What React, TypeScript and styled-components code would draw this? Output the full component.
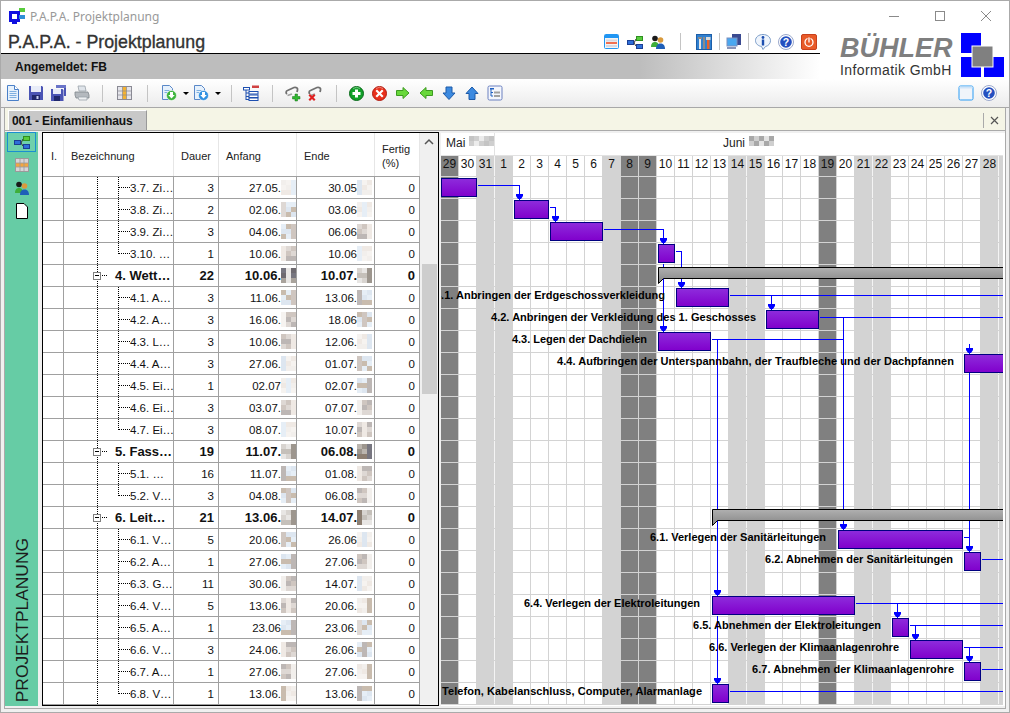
import React from "react";
import styled, { createGlobalStyle } from "styled-components";

const Global = createGlobalStyle`
  html, body { margin: 0; padding: 0; width: 1010px; height: 713px; overflow: hidden; background: #f0f0f0; }
  body { font-family: "Liberation Sans", Arial, sans-serif; }
  * { box-sizing: border-box; }
`;

/* ---------- shell ---------- */
const Win = styled.div`
  width: 1010px; height: 713px; border: 1px solid #aaa; background: #f0f0f0;
  display: flex; flex-direction: column; overflow: hidden;
`;
const Masthead = styled.header`display: flex; height: 78px; background: #fff;`;
const MastLeft = styled.div`width: 819px; display: flex; flex-direction: column;`;
const TitleBar = styled.div`height: 29px; display: flex; align-items: center; padding-left: 8px; gap: 5px;`;
const WinTitle = styled.span`font-family: "Noto Sans", sans-serif; font-size: 12px; color: #999; padding-top: 1px;`;
const AppBar = styled.div`height: 24px; display: flex; align-items: center; padding-left: 7px; border-bottom: 1px solid #000;`;
const AppTitle = styled.h1`
  margin: 0 auto 0 0; font-size: 17.8px; font-weight: 400; color: #333; -webkit-text-stroke: .35px #333; line-height: 24px;
`;
const UserBand = styled.div`
  height: 25px; display: flex; align-items: center; padding-left: 14px;
  background: linear-gradient(90deg, #bdbdbd 0, #bdbdbd 78%, #fff 100%);
  font-size: 12px; font-weight: 700; color: #111;
`;
const MastRight = styled.div`flex: 1; display: flex; flex-direction: column;`;
const WinControls = styled.div`height: 29px; display: flex; justify-content: flex-end; margin-right: 0;`;
const Ctl = styled.span`width: 46px; display: flex; align-items: center; justify-content: center;`;
const LogoRow = styled.div`display: flex; padding: 3px 0 0 20px; gap: 8px;`;
const LogoText = styled.div`width: 112px; display: flex; flex-direction: column; color: #7f7f7f;`;
const LogoName = styled.span`font-size: 27px; font-weight: 700; font-style: italic; line-height: 30px; height: 29px; white-space: nowrap;`;
const LogoSub = styled.span`font-size: 14px; letter-spacing: .4px; color: #333; line-height: 16px; white-space: nowrap;`;

/* ---------- toolbar ---------- */
const Toolbar = styled.div`
  height: 29px; display: flex; align-items: center; padding-right: 9px; flex: none;
  background: linear-gradient(#fff, #ececec); border-bottom: 1px solid #a8a8a8;
`;
const Tool = styled.span`width: 23px; height: 22px; display: flex; align-items: center; justify-content: center; flex: none;`;
const Drop = styled.span`width: 32px; height: 22px; display: flex; align-items: center; padding-left: 3px; gap: 6px; flex: none;`;
const Caret = styled.i`width: 0; height: 0; border: 3px solid transparent; border-top: 3px solid #000; border-bottom: 0; flex: none;`;
const Sep = styled.span<{ $l: number; $r: number }>`
  width: 1px; height: 17px; background: #c4c4c4; flex: none;
  margin-left: ${p => p.$l}px; margin-right: ${p => p.$r}px;
`;
const Spring = styled.span`margin-left: auto;`;

/* ---------- panel ---------- */
const Panel = styled.div`
  margin: 0 3px 3px; flex: 1; display: flex; flex-direction: column;
  border: 1px solid #aaa; border-top: 0; min-height: 0;
`;
const TabStrip = styled.div`
  height: 23px; flex: none; display: flex; align-items: flex-end; padding-left: 3px;
  background: #f5f5e6; border-bottom: 1px solid #aaa;
`;
const Tab = styled.div`
  width: 139px; height: 20px; padding: 3px 0 0 3px; background: #c8c8c8;
  border-top: 1px solid #fff; border-left: 1px solid #fff; border-right: 1px solid #999;
  font-size: 12px; font-weight: 700; color: #111; letter-spacing: -.1px; white-space: nowrap;
`;
const TabClose = styled.div`
  margin: 0 0 2px auto; width: 22px; height: 15px; border-left: 1px solid #aaa;
  display: flex; align-items: center; justify-content: center;
`;
const Main = styled.div`flex: 1; display: flex; align-items: flex-start; padding: 1px 0 2px; min-height: 0;`;

/* ---------- side rail ---------- */
const Rail = styled.nav`
  width: 33px; align-self: stretch; background: #66cca5; display: flex; flex-direction: column; align-items: center; gap: 3px;
`;
const RailBtn = styled.span<{ $active?: boolean }>`
  width: 29px; height: 20px; display: flex; align-items: center; justify-content: center;
  border: 1px solid ${p => (p.$active ? "#1a8fd0" : "transparent")};
  background: ${p => (p.$active ? "#6fd0ac" : "transparent")};
`;
const RailLabel = styled.span`
  margin-top: auto; padding-top: 0; margin-bottom: 4px; writing-mode: vertical-rl; transform: rotate(180deg);
  font-size: 17.4px; color: #1c1c1c; line-height: 20px; white-space: nowrap;
`;

/* ---------- table ---------- */
const Frame = styled.section`
  width: 397px; height: 574px; margin-left: 4px; flex: none; display: flex; background: #fff;
  border: 1px solid #000; border-bottom-color: #000;
`;
const Table = styled.div`width: 377px; flex: none;`;
const cols = "21px 110px 45px 78px 78px 45px";
const HeadRow = styled.div`
  display: grid; grid-template-columns: ${cols}; height: 44px; border-bottom: 1px solid #a0a0a0;
`;
const HeadCell = styled.div<{ $first?: boolean }>`
  border-right: 1px solid #e6e6e6; display: flex; align-items: center; padding: 2px 0 0 ${p => (p.$first ? 8 : 7)}px;
  font-size: 11px; line-height: 14px; color: #222;
`;
const Row = styled.div`display: grid; grid-template-columns: ${cols}; height: 22px;`;
const Cell = styled.div<{ $bold?: boolean }>`
  border-right: 1px solid #a0a0a0; border-bottom: 1px solid #a0a0a0; display: flex; align-items: center; overflow: hidden;
  font-size: ${p => (p.$bold ? "13px" : "11.5px")}; font-weight: ${p => (p.$bold ? 700 : 400)}; color: #111; white-space: nowrap;
`;
const NumCell = styled(Cell)`justify-content: flex-end; padding-right: 4px;`;
const DateCell = styled(Cell)<{ $end?: boolean }>`justify-content: flex-end; padding-right: ${p => (p.$end ? 2 : 0)}px;`;

const dotV = "repeating-linear-gradient(to bottom, #000 0 1px, transparent 1px 2px)";
const dotH = "repeating-linear-gradient(to right, #000 0 1px, transparent 1px 2px)";
const NameCell = styled(Cell)<{ $kind: "child" | "last" | "group" }>`
  padding-left: ${p => (p.$kind === "group" ? 29 : 66)}px;
  background-repeat: no-repeat;
  background-image: ${p =>
    p.$kind === "group"
      ? `${dotV}, ${dotH}`
      : `${dotV}, ${dotV}, ${dotH}`};
  background-size: ${p =>
    p.$kind === "group"
      ? "1px 100%, 6px 1px"
      : `1px 100%, 1px ${p.$kind === "last" ? "11px" : "100%"}, 11px 1px`};
  background-position: ${p =>
    p.$kind === "group" ? "33px 0, 38px 10px" : "33px 0, 54px 0, 55px 10px"};
`;
const Toggle = styled.span`
  width: 8px; height: 8px; border: 1px solid #808080; background: #fff; margin-right: 14px; flex: none;
  display: flex; align-items: center; justify-content: center;
  &::after { content: ""; width: 4px; height: 1px; background: #000; }
`;
const Scroll = styled.div`width: 18px; flex: none; background: #f0f0f0; display: flex; flex-direction: column;`;
const ScrollBtn = styled.div`height: 17px; display: flex; align-items: center; justify-content: center;`;
const Thumb = styled.div`width: 15px; height: 130px; margin: 114px 0 0 2px; background: #cdcdcd;`;

/* ---------- redacted years ---------- */
const Redact = styled.span<{ $c: number; $t: number }>`
  display: inline-grid; flex: none; grid-template-columns: repeat(${p => p.$c}, ${p => p.$t}px); grid-auto-rows: ${p => p.$t}px;
`;
const Tile = styled.i.attrs<{ $f: string }>(p => ({ style: { background: p.$f } }))<{ $f: string }>``;

const pale = ["#f6f3f0", "#ded8d4", "#c9bcae", "#f2efec", "#bdb7b5", "#dde6f0", "#efe9e4", "#cfc6c0", "#e6eef6"];
const dark = ["#e8e6e4", "#a9a39c", "#8d7f72", "#c5c0ba", "#777680", "#9d968e", "#d8d4d0", "#6e6a70", "#bbb5ae"];
const grey = ["#dcdcdc", "#bfbfbf", "#ececec", "#cfcfcf", "#a8a8a8", "#d8d8d8", "#c4c4c4", "#e4e4e4"];

function Blot({ seed, tones = pale, cols: c = 3, rows = 3, size = 5 }: { seed: number; tones?: string[]; cols?: number; rows?: number; size?: number }) {
  const tiles = Array.from({ length: c * rows }, (_, i) => tones[(seed * 7 + i * (seed % 5 + 2) + i * i) % tones.length]);
  return (
    <Redact $c={c} $t={size} aria-hidden>
      {tiles.map((f, i) => <Tile key={i} $f={f} />)}
    </Redact>
  );
}

/* ---------- chart ---------- */
const Chart = styled.section`flex: 1; height: 573px; margin: 1px 0 0 2px; background: #fff; overflow: hidden;`;
const Months = styled.div`height: 23px; display: flex; border-bottom: 1px solid #e2e2e2; width: 562px;`;
const Month = styled.div<{ $w?: number; $pad: number }>`
  ${p => (p.$w ? `width:${p.$w}px; border-right:1px solid #e2e2e2;` : "flex:1;")}
  padding: 3px 0 0 ${p => p.$pad}px; display: flex; gap: 4px; font-size: 12px; color: #222;
`;
const Days = styled.div`display: flex; width: 562px; height: 20px; overflow: hidden;`;
const Day = styled.div<{ $tone: "w" | "l" | "d"; $gap: string }>`
  width: 18px; flex: none; height: 20px; text-align: center; font-size: 12px; line-height: 16px; color: #111;
  background: ${p => (p.$tone === "d" ? "#808080" : p.$tone === "l" ? "#d3d3d3" : "#fff")};
  border-right: 1px solid ${p => p.$gap};
`;
const GanttSvg = styled.svg`display: block; width: 562px; height: 529px;`;
const BarLabel = styled.text`font: 700 11px "Liberation Sans", Arial, sans-serif; fill: #000;`;

/* ---------- icons ---------- */
const G = styled.svg<{ $s?: number }>`display: block; width: ${p => p.$s ?? 16}px; height: ${p => p.$s ?? 16}px; flex: none; overflow: visible;`;

const Flow = ({ s }: { s?: number }) => (
  <G $s={s} viewBox="0 0 16 16">
    <path d="M7 9 L9 5 M7 9 L9 12" stroke="#333" fill="none" />
    <rect x=".5" y="6.5" width="6" height="4" fill="#2f6fd8" stroke="#1b3f95" />
    <rect x="9.5" y="2.5" width="6" height="4" fill="#58cc3c" stroke="#2f9020" />
    <rect x="9.5" y="10.5" width="6" height="4" fill="#2f6fd8" stroke="#1b3f95" />
  </G>
);
const Users = () => (
  <G viewBox="0 0 16 16">
    <circle cx="5" cy="4.5" r="2.8" fill="#1a1a1a" />
    <path d="M1 13c0-4 2-5 4-5s4 1 4 5z" fill="#3fae3a" />
    <circle cx="10.5" cy="6" r="2.8" fill="#d99a3c" />
    <path d="M6 15c0-4 2-5.500 4.500-5.500S15 11 15 15z" fill="#1f5fb8" />
  </G>
);
const Calendar = () => (
  <G viewBox="0 0 16 16">
    <rect x=".5" y=".5" width="14" height="14" rx="1" fill="#f4f4f4" stroke="#2196f3" />
    <rect x="1" y="1" width="13" height="3" fill="#2196f3" />
    <rect x="2" y="5.500" width="11" height="2" fill="#d8d8e0" />
    <rect x="2" y="8" width="11" height="2" fill="#f07050" />
    <rect x="2" y="11" width="11" height="2" fill="#d8d8e0" />
  </G>
);
const Toolbox = () => (
  <G viewBox="0 0 16 16">
    <rect x=".5" y=".5" width="15" height="15" fill="#2f80d0" stroke="#1d5ea8" />
    <rect x="3" y="3" width="2" height="12" fill="#e8e8e8" />
    <path d="M2 3h4v2H2z" fill="#8a8a8a" />
    <rect x="7" y="3" width="2" height="12" fill="#8a8a8a" />
    <rect x="11" y="6" width="2.500" height="9" fill="#e8622a" />
    <rect x="10" y="3" width="4.500" height="3" fill="#dcdcdc" />
  </G>
);
const Monitor = () => (
  <G viewBox="0 0 16 16">
    <rect x="6" y="0" width="9" height="11" fill="#3a4a90" />
    <rect x="1" y="4" width="10" height="8" fill="#4aa8f0" stroke="#7a90c0" />
    <path d="M1 13h9v2H1z" fill="#8a94b8" />
  </G>
);
const Info = () => (
  <G viewBox="0 0 16 16">
    <path d="M8 .5c4.200 0 7.500 2.600 7.500 6s-2.500 5.500-5 6L8 15.500l-1.500-3c-3-.5-6-2.500-6-6s3.300-6 7.500-6z" fill="#eef4fc" stroke="#7a9cc8" />
    <circle cx="8" cy="3.500" r="1.400" fill="#1d4fb0" />
    <rect x="6.800" y="5.500" width="2.400" height="6" fill="#1d4fb0" />
  </G>
);
const Help = () => (
  <G viewBox="0 0 16 16">
    <circle cx="8" cy="8" r="7.500" fill="#fff" stroke="#9aa8cc" />
    <circle cx="8" cy="8" r="5.800" fill="#2450c0" />
    <text x="8" y="11.800" textAnchor="middle" fontSize="10.500" fontWeight="700" fill="#fff" fontFamily="Liberation Sans">?</text>
  </G>
);
const Power = () => (
  <G viewBox="0 0 16 16">
    <rect x=".5" y=".5" width="15" height="15" rx="1.500" fill="#e85a28" stroke="#c8401c" />
    <circle cx="8" cy="8.300" r="4" fill="none" stroke="#fff" strokeWidth="1.300" />
    <path d="M8 3.500v5" stroke="#e85a28" strokeWidth="3" />
    <path d="M8 3.500v5" stroke="#fff" strokeWidth="1.300" />
  </G>
);
const PageIcon = () => (
  <G viewBox="0 0 16 16">
    <path d="M2.500 .5h7l4 4v11h-11z" fill="#e6f1fc" stroke="#4a80c8" />
    <path d="M9.500 .5v4h4" fill="#fff" stroke="#4a80c8" />
    <path d="M4.500 6.500h7M4.500 8.500h7M4.500 10.500h7M4.500 12.500h7" stroke="#7fb0e0" />
  </G>
);
const Save = () => (
  <G viewBox="0 0 16 16">
    <path d="M1 1h13l1 1v13H1z" fill="#4a54b4" />
    <rect x="3" y="1" width="10" height="6" fill="#e8ecf8" />
    <rect x="4" y="10" width="8" height="5" fill="#20286c" />
    <rect x="8.500" y="11" width="2" height="3" fill="#c8d0f0" />
  </G>
);
const SaveAll = () => (
  <G viewBox="0 0 16 16">
    <path d="M5 0h10v11h-2V0z" fill="#4a54b4" />
    <rect x="5" y="0" width="10" height="3" fill="#6a74c8" />
    <path d="M0 4h11.500l1 1v11H0z" fill="#4a54b4" />
    <rect x="2" y="4" width="8" height="5" fill="#e8ecf8" />
    <rect x="3" y="11" width="6" height="5" fill="#20286c" />
  </G>
);
const Printer = () => (
  <G viewBox="0 0 16 16">
    <path d="M4 1h7l1 5H5z" fill="#dfe4ea" stroke="#9aa2aa" strokeWidth=".8" />
    <path d="M1 7h13l1 3v3H2l-1-3z" fill="#b4b9be" stroke="#7f858c" strokeWidth=".8" />
    <path d="M4 12h9v3H5z" fill="#eef0f2" stroke="#9aa2aa" strokeWidth=".8" />
  </G>
);
const ColumnsIcon = () => (
  <G viewBox="0 0 16 16">
    <rect x=".5" y="1.500" width="14" height="13" fill="#e4e4ea" stroke="#8a8a94" />
    <rect x="5.500" y="2" width="4" height="12" fill="#f4b230" />
    <path d="M5.500 2v12M9.500 2v12M1 6h13M1 10h13" stroke="#8a8a94" strokeWidth=".7" />
  </G>
);
const TableIcon = () => (
  <G viewBox="0 0 16 16">
    <rect x="1.500" y="1.500" width="13" height="13" fill="#d8d4d8" stroke="#9a9a9a" />
    <rect x="2" y="6" width="12" height="4" fill="#f4a640" />
    <path d="M6 2v12M10 2v12M2 6h12M2 10h12" stroke="#9a9a9a" strokeWidth=".8" />
  </G>
);
const DocBadge = ({ c, d }: { c: string; d: string }) => (
  <G viewBox="0 0 16 16">
    <path d="M1.500 .5h7l3 3v11h-10z" fill="#e6f1fc" stroke="#5a88c8" />
    <path d="M3.500 5.500h5M3.500 7.500h5" stroke="#7fb0e0" />
    <circle cx="10.500" cy="10.500" r="5" fill={c} stroke="#fff" strokeWidth=".6" />
    <path d={d} fill="#fff" />
  </G>
);
const TreeIcon = () => (
  <G viewBox="0 0 16 16">
    <rect x="9" y=".5" width="7" height="2.500" fill="#d04040" />
    <rect x=".5" y="2.500" width="6" height="2.500" fill="#fff" stroke="#1d4fb0" />
    <path d="M3 5v10M3 8h3M3 11.500h3M3 14.500h3" stroke="#1d4fb0" />
    <rect x="6" y="6.500" width="9" height="2.500" fill="#fff" stroke="#1d4fb0" />
    <rect x="6" y="10" width="9" height="2.500" fill="#fff" stroke="#1d4fb0" />
    <rect x="6" y="13" width="9" height="2.500" fill="#fff" stroke="#1d4fb0" />
  </G>
);
const Chain = ({ children }: { children: React.ReactNode }) => (
  <G viewBox="0 0 16 16">
    <path d="M2 9c-1.500-1-1-3 .5-3.500L9 2.500c2-.5 4 .5 3.500 2.500l-.5 2" fill="none" stroke="#707070" strokeWidth="1.800" />
    <path d="M2.500 10.500L7 9" stroke="#a0a0a0" strokeWidth="1.800" />
    {children}
  </G>
);
const RoundBtn = ({ c, e, children }: { c: string; e: string; children: React.ReactNode }) => (
  <G $s={15} viewBox="0 0 15 15">
    <circle cx="7.500" cy="7.500" r="7" fill={c} stroke={e} />
    <path d="M4 2.500a6 6 0 0 1 7 0" stroke="#fff" strokeOpacity=".4" fill="none" />
    {children}
  </G>
);
const Arrow = ({ d, c, e }: { d: string; c: string; e: string }) => (
  <G $s={14} viewBox="0 0 14 14"><path d={d} fill={c} stroke={e} /></G>
);
const MiniTree = () => (
  <G viewBox="0 0 16 16">
    <rect x="1" y="1" width="14" height="14" rx="1.500" fill="#f4f6fc" stroke="#6a80c0" />
    <path d="M4 4v7h2M4 7.500h2" stroke="#2060c0" fill="none" />
    <rect x="3" y="3" width="4" height="1.500" fill="#2060c0" />
    <rect x="7" y="6.500" width="6" height="2" fill="#a0a0a0" />
    <rect x="7" y="10" width="6" height="2" fill="#a0a0a0" />
  </G>
);
const WindowIcon = () => (
  <G viewBox="0 0 16 16">
    <rect x="1" y="1" width="14" height="14" rx="1.500" fill="#f0f4fa" stroke="#2a9cf4" />
    <rect x="1.500" y="1.500" width="13" height="2" fill="#cfe4f8" />
  </G>
);
const AppIcon = () => (
  <G viewBox="0 0 16 16">
    <rect x="10" y="0" width="6" height="4" fill="#58cc3c" />
    <rect x="0" y="3" width="11" height="11" fill="#1010e0" />
    <rect x="3" y="6" width="5" height="5" fill="#fff" />
    <rect x="3" y="13" width="5" height="3" fill="#1010e0" />
    <rect x="10" y="7" width="6" height="4" fill="#2f90d8" />
  </G>
);
const RailDoc = () => (
  <G viewBox="0 0 16 16">
    <path d="M2.500 .5h7.500l3.500 3.500v11.500h-11z" fill="#fff" stroke="#000" />
  </G>
);
const LogoMark = () => (
  <G $s={44} viewBox="0 0 44 44">
    <rect x="1" y="0" width="20" height="20" fill="#0000ff" />
    <rect x="1" y="24" width="20" height="20" fill="#0000ff" />
    <rect x="24" y="24" width="20" height="20" fill="#0000ff" />
    <rect x="12" y="13" width="21" height="21" fill="#808080" stroke="#fff" />
  </G>
);

/* ---------- data ---------- */
type R = [string, string, string, string, string?];
const rows: R[] = [
  ["3.7. Zi…", "3", "27.05.", "30.05"],
  ["3.8. Zi…", "2", "02.06.", "03.06"],
  ["3.9. Zi…", "3", "04.06.", "06.06"],
  ["3.10. …", "1", "10.06.", "10.06", "last"],
  ["4. Wett…", "22", "10.06.", "10.07.", "group"],
  ["4.1. A…", "3", "11.06.", "13.06."],
  ["4.2. A…", "3", "16.06.", "18.06"],
  ["4.3. L…", "3", "10.06.", "12.06."],
  ["4.4. A…", "3", "27.06.", "01.07."],
  ["4.5. Ei…", "1", "02.07", "02.07."],
  ["4.6. Ei…", "3", "03.07.", "07.07."],
  ["4.7. Ei…", "3", "08.07.", "10.07.", "last"],
  ["5. Fass…", "19", "11.07.", "06.08.", "group"],
  ["5.1.  …", "16", "11.07.", "01.08."],
  ["5.2. V…", "3", "04.08.", "06.08.", "last"],
  ["6. Leit…", "21", "13.06.", "14.07.", "group"],
  ["6.1. V…", "5", "20.06.", "26.06"],
  ["6.2. A…", "1", "27.06.", "27.06."],
  ["6.3. G…", "11", "30.06.", "14.07."],
  ["6.4. V…", "5", "13.06.", "20.06."],
  ["6.5. A…", "1", "23.06", "23.06."],
  ["6.6. V…", "3", "24.06.", "26.06."],
  ["6.7. A…", "1", "27.06.", "27.06."],
  ["6.8. V…", "1", "13.06.", "13.06.", "last"],
];

const dayNums = [29, 30, 31, ...Array.from({ length: 29 }, (_, i) => i + 1)];
const darkIdx = new Set([0, 10, 11, 21]);
const lightIdx = new Set([2, 3, 9, 16, 17, 23, 24, 30, 31]);
const toneOf = (i: number): "w" | "l" | "d" => (darkIdx.has(i) ? "d" : lightIdx.has(i) ? "l" : "w");
const gapOf = (i: number) => (toneOf(i) === "l" && toneOf(i + 1) === "l" ? "#f4f4f4" : "#d3d3d3");

const bars: [number, number, number][] = [
  [0, 441, 477], [1, 514, 549], [2, 550, 603], [3, 658, 675], [5, 676, 729], [6, 766, 819], [7, 658, 711],
  [8, 964, 1006], [16, 838, 963], [17, 964, 981], [19, 712, 855], [20, 892, 909], [21, 910, 963], [22, 964, 981], [23, 712, 729],
];
const links = [
  "M477 185H519V200", "M549 207H555V222", "M603 229H663V244", "M675 251H681V288", "M663 263V332",
  "M729 295H1003", "M771 295V310", "M819 317H1003", "M843 317V530", "M711 339H843", "M717 339V596", "M717 615V684",
  "M969 343V552", "M963 537H969", "M981 559H1003", "M855 603H1003", "M897 603V618", "M909 625H1003", "M915 625V640",
  "M963 647H1003", "M969 647V662", "M981 669H1003", "M729 691H1003",
];
const heads: [number, number][] = [
  [519, 1], [555, 2], [663, 3], [681, 5], [771, 6], [663, 7], [969, 8], [843, 16], [969, 17], [717, 19], [897, 20], [915, 21], [969, 22], [717, 23],
];
const labels: [number, number, number, string][] = [
  [5, 435, 230, "4.1. Anbringen der Erdgeschossverkleidung"],
  [6, 491, 265, "4.2. Anbringen der Verkleidung des 1. Geschosses"],
  [7, 512, 135, "4.3. Legen der Dachdielen"],
  [8, 557, 397, "4.4. Aufbringen der Unterspannbahn, der Traufbleche und der Dachpfannen"],
  [16, 650, 176, "6.1. Verlegen der Sanitärleitungen"],
  [17, 765, 188, "6.2. Abnehmen der Sanitärleitungen"],
  [19, 524, 176, "6.4. Verlegen der Elektroleitungen"],
  [20, 693, 188, "6.5. Abnehmen der Elektroleitungen"],
  [21, 709, 190, "6.6. Verlegen der Klimaanlagenrohre"],
  [22, 752, 202, "6.7. Abnehmen der Klimaanlagenrohre"],
  [23, 442, 260, "Telefon, Kabelanschluss, Computer, Alarmanlage"],
];
const summaries: [number, number][] = [[4, 658], [15, 712]];

function Gantt() {
  return (
    <GanttSvg viewBox="441 176 562 529" shapeRendering="crispEdges">
      <defs>
        <linearGradient id="barFill" x1="0" y1="0" x2="0" y2="1">
          <stop offset="0" stopColor="#8e2cdc" />
          <stop offset="1" stopColor="#8000cc" />
        </linearGradient>
        <linearGradient id="sumFill" x1="0" y1="0" x2="0" y2="1">
          <stop offset="0" stopColor="#b0b0b0" />
          <stop offset="1" stopColor="#858585" />
        </linearGradient>
      </defs>
      {dayNums.map((_, i) => {
        const x = 441 + 18 * i;
        const t = toneOf(i);
        return (
          <g key={i}>
            {t !== "w" && <rect x={x} y={176} width={17} height={529} fill={t === "d" ? "#808080" : "#d3d3d3"} />}
            <rect x={x + 17} y={176} width={1} height={529} fill={gapOf(i)} />
          </g>
        );
      })}
      {Array.from({ length: 25 }, (_, k) => (
        <rect key={k} x={441} y={176 + 22 * k} width={562} height={1} fill="#d3d3d3" />
      ))}
      <g transform="translate(.5 .5)">
        {links.map(d => <path key={d} d={d} fill="none" stroke="#0000ff" />)}
      </g>
      {heads.map(([x, k]) => {
        const y = 172 + 22 * k;
        return <polygon key={`${x}-${k}`} shapeRendering="auto" fill="#0000ff" points={`${x - 3},${y} ${x + 4},${y} ${x + 4},${y + 2} ${x + 2},${y + 5} ${x - 1},${y + 5} ${x - 3},${y + 2}`} />;
      })}
      <g transform="translate(.5 .5)">
        {summaries.map(([k, x]) => {
          const y = 267 - 88 + 22 * k;
          return (
            <path key={k} d={`M${x} ${y}H1010V${y + 11}H${x + 5}L${x} ${y + 16}Z`} fill="url(#sumFill)" stroke="#000" shapeRendering="auto" />
          );
        })}
        {bars.map(([k, a, b]) => (
          <rect key={k} x={a} y={178 + 22 * k} width={b - a - 1} height={18} fill="url(#barFill)" stroke="#000080" />
        ))}
      </g>
      {labels.map(([k, x, w, t]) => (
        <BarLabel key={k} x={x} y={189 + 22 * k} textLength={w} lengthAdjust="spacing" shapeRendering="auto">{t}</BarLabel>
      ))}
    </GanttSvg>
  );
}

export default function App() {
  return (
    <Win>
      <Global />
      <Masthead>
        <MastLeft>
          <TitleBar><AppIcon /><WinTitle>P.A.P.A. Projektplanung</WinTitle></TitleBar>
          <AppBar>
            <AppTitle>P.A.P.A. - Projektplanung</AppTitle>
            <Tool><Calendar /></Tool>
            <Tool><Flow /></Tool>
            <Tool><Users /></Tool>
            <Sep $l={11} $r={11} />
            <Tool><Toolbox /></Tool>
            <Sep $l={4} $r={2} />
            <Tool><Monitor /></Tool>
            <Sep $l={3} $r={2} />
            <Tool><Info /></Tool>
            <Tool><Help /></Tool>
            <Tool><Power /></Tool>
          </AppBar>
          <UserBand>Angemeldet: FB</UserBand>
        </MastLeft>
        <MastRight>
          <WinControls>
            <Ctl><G $s={12} viewBox="0 0 12 12"><path d="M1 6.500h10" stroke="#8a8a8a" /></G></Ctl>
            <Ctl><G $s={12} viewBox="0 0 12 12"><rect x="1.500" y="1.500" width="9" height="9" fill="none" stroke="#8a8a8a" /></G></Ctl>
            <Ctl><G $s={12} viewBox="0 0 12 12"><path d="M1 1l10 10M11 1L1 11" stroke="#8a8a8a" /></G></Ctl>
          </WinControls>
          <LogoRow>
            <LogoText>
              <LogoName>BÜHLER</LogoName>
              <LogoSub>Informatik GmbH</LogoSub>
            </LogoText>
            <LogoMark />
          </LogoRow>
        </MastRight>
      </Masthead>

      <Toolbar>
        <Tool><PageIcon /></Tool>
        <Tool><Save /></Tool>
        <Tool><SaveAll /></Tool>
        <Tool><Printer /></Tool>
        <Sep $l={9} $r={10} />
        <Tool><ColumnsIcon /></Tool>
        <Sep $l={11} $r={10} />
        <Drop><DocBadge c="#3cb43c" d="M9 7h3v3h1.800l-3.300 3.500L7.200 10H9z" /><Caret /></Drop>
        <Drop><DocBadge c="#2f90e0" d="M9 7h3v3h1.800l-3.300 3.500L7.200 10H9z" /><Caret /></Drop>
        <Sep $l={9} $r={7} />
        <Tool><TreeIcon /></Tool>
        <Sep $l={10} $r={8} />
        <Tool><Chain><path d="M10 9h2.500v2.500H15v2.500h-2.500v2H10v-2H7.500v-2.500H10z" fill="#2fb82f" stroke="#187018" strokeWidth=".5" /></Chain></Tool>
        <Tool><Chain><path d="M2 9l2 2 2-2 1.500 1.500-2 2 2 2L6 16l-2-2-2 2-1.500-1.500 2-2-2-2z" fill="#e02020" /></Chain></Tool>
        <Sep $l={9} $r={8} />
        <Tool><RoundBtn c="#12a02a" e="#0a6a1a"><path d="M6 3.500h3V6h2.500v3H9v2.500H6V9H3.500V6H6z" fill="#fff" /></RoundBtn></Tool>
        <Tool><RoundBtn c="#e8301c" e="#b01c10"><path d="M5 3.500l2.500 2.500L10 3.500 11.500 5 9 7.500l2.500 2.500-1.500 1.500L7.500 9 5 11.500 3.500 10 6 7.500 3.500 5z" fill="#fff" /></RoundBtn></Tool>
        <Tool><Arrow d="M.5 4.500h6.500v-3l6 5.500-6 5.500v-3H.5z" c="#68d83a" e="#3c9a20" /></Tool>
        <Tool><Arrow d="M13.500 4.500H7v-3L1 7l6 5.500v-3h6.500z" c="#68d83a" e="#3c9a20" /></Tool>
        <Tool><Arrow d="M4 1h6v6h3l-6 6.500L1 7h3z" c="#3c8ae0" e="#1c5aa8" /></Tool>
        <Tool><Arrow d="M4 13.500h6v-6h3L7 1 1 7.500h3z" c="#3c8ae0" e="#1c5aa8" /></Tool>
        <Tool><MiniTree /></Tool>
        <Spring />
        <Tool><WindowIcon /></Tool>
        <Tool><Help /></Tool>
      </Toolbar>

      <Panel>
        <TabStrip>
          <Tab>001 - Einfamilienhaus</Tab>
          <TabClose><G $s={9} viewBox="0 0 9 9"><path d="M1 1l7 7M8 1L1 8" stroke="#555" strokeWidth="1.200" /></G></TabClose>
        </TabStrip>
        <Main>
          <Rail>
            <RailBtn $active><Flow /></RailBtn>
            <RailBtn><TableIcon /></RailBtn>
            <RailBtn><Users /></RailBtn>
            <RailBtn><RailDoc /></RailBtn>
            <RailLabel>PROJEKTPLANUNG</RailLabel>
          </Rail>

          <Frame>
            <Table>
              <HeadRow>
                <HeadCell $first>I.</HeadCell>
                <HeadCell>Bezeichnung</HeadCell>
                <HeadCell>Dauer</HeadCell>
                <HeadCell>Anfang</HeadCell>
                <HeadCell>Ende</HeadCell>
                <HeadCell>Fertig<br />(%)</HeadCell>
              </HeadRow>
              {rows.map((r, i) => {
                const bold = r[4] === "group";
                const kind = (r[4] ?? "child") as "child" | "last" | "group";
                return (
                  <Row key={i}>
                    <Cell />
                    <NameCell $kind={kind} $bold={bold}>
                      {bold && <Toggle />}
                      {r[0]}
                    </NameCell>
                    <NumCell $bold={bold}>{r[1]}</NumCell>
                    <DateCell $bold={bold}>{r[2]}<Blot seed={i + 3} tones={bold ? dark : pale} /></DateCell>
                    <DateCell $bold={bold} $end>{r[3]}<Blot seed={i + 11} tones={bold ? dark : pale} /></DateCell>
                    <NumCell $bold={bold}>0</NumCell>
                  </Row>
                );
              })}
            </Table>
            <Scroll>
              <ScrollBtn><G $s={10} viewBox="0 0 10 10"><path d="M1 7l4-4 4 4" fill="none" stroke="#555" strokeWidth="1.500" /></G></ScrollBtn>
              <Thumb />
            </Scroll>
          </Frame>

          <Chart>
            <Months>
              <Month $w={54} $pad={5}>Mai <Blot seed={2} tones={grey} cols={5} rows={2} size={5} /></Month>
              <Month $pad={228}>Juni <Blot seed={4} tones={grey} cols={5} rows={2} size={5} /></Month>
            </Months>
            <Days>
              {dayNums.map((d, i) => <Day key={i} $tone={toneOf(i)} $gap={gapOf(i)}>{i < 31 ? d : ""}</Day>)}
            </Days>
            <Gantt />
          </Chart>
        </Main>
      </Panel>
    </Win>
  );
}
